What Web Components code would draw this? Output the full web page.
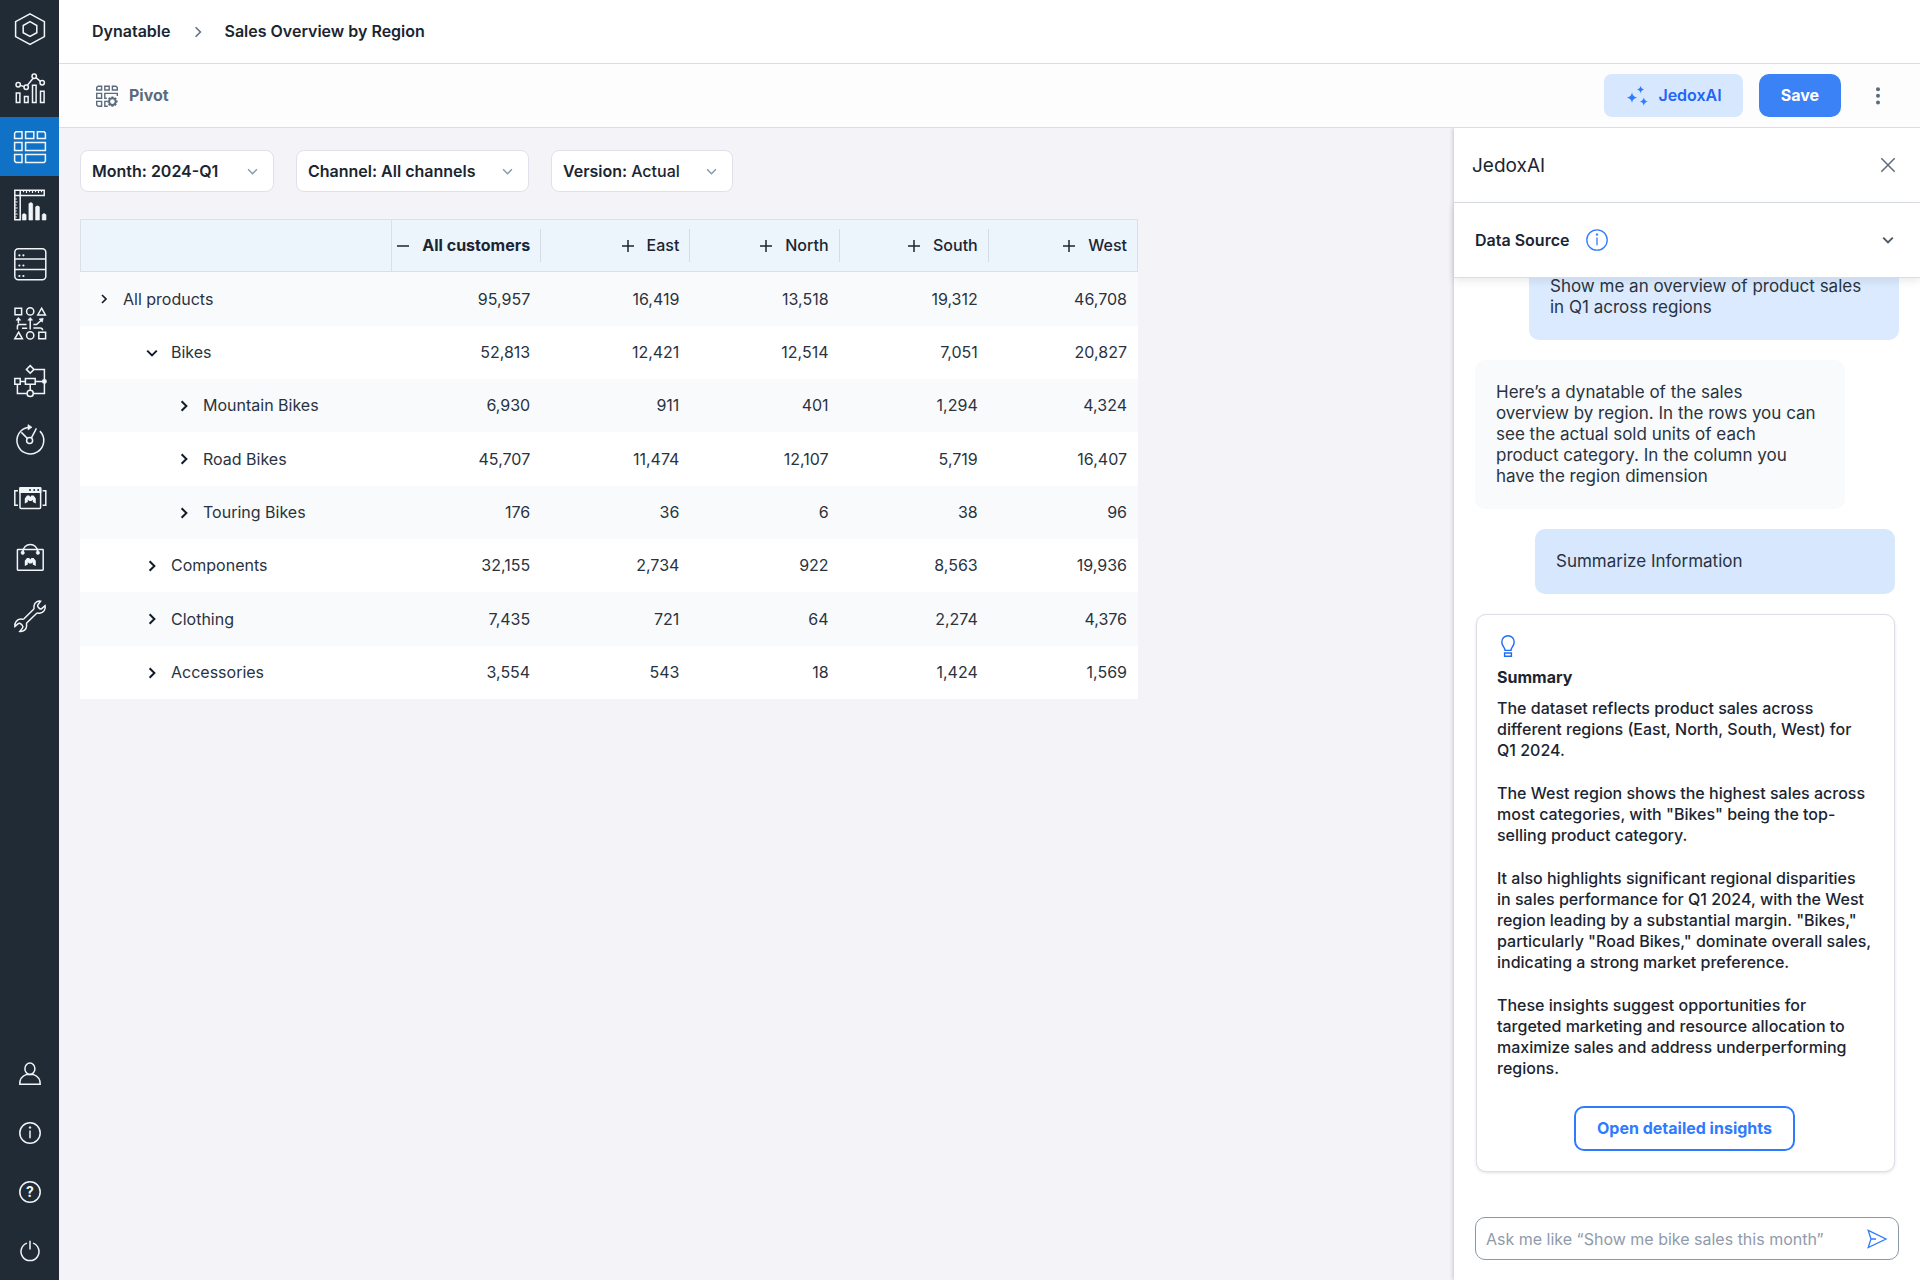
<!DOCTYPE html>
<html lang="en">
<head>
<meta charset="utf-8">
<title>Sales Overview by Region</title>
<style>
  :root {
    --ink: #1b2531;
    --ink-soft: #29333f;
    --muted: #5c6b7c;
    --line: #dadde6;
    --page: #f3f3f8;
    --rail: #212b36;
    --blue: #2f7bff;
    --blue-soft: #d7e8fe;
  }
  html, body { margin: 0; height: 100%; }
  body {
    font-family: Inter, "Liberation Sans", sans-serif;
    font-size: 16px;
    line-height: 21px;
    color: var(--ink);
    background: var(--page);
  }
</style>
</head>
<body>
<app-shell>
  <app-rail slot="rail"></app-rail>
  <app-crumbs slot="head"></app-crumbs>
  <app-toolbar slot="head"></app-toolbar>
  <section slot="main">
    <filter-bar>
      <filter-select label="Month:" value="2024-Q1" strong style="--w:194px"></filter-select>
      <filter-select label="Channel:" value="All channels" strong style="--w:233px"></filter-select>
      <filter-select label="Version:" value="Actual" style="--w:182px"></filter-select>
    </filter-bar>
    <dyna-table></dyna-table>
  </section>
  <ai-panel slot="side">
    <chat-bubble from="user">Show me an overview of product sales in Q1 across regions</chat-bubble>
    <chat-bubble from="ai">Here’s a dynatable of the sales overview by region. In the rows you can see the actual sold units of each product category. In the column you have the region dimension</chat-bubble>
    <chat-bubble from="user" suggested>Summarize Information</chat-bubble>
    <summary-card heading="Summary">
      <p>The dataset reflects product sales across different regions (East, North, South, West) for Q1 2024.</p>
      <p>The West region shows the highest sales across most categories, with "Bikes" being the top-selling product category.</p>
      <p>It also highlights significant regional disparities in sales performance for Q1 2024, with the West region leading by a substantial margin. "Bikes," particularly "Road Bikes," dominate overall sales, indicating a strong market preference.</p>
      <p>These insights suggest opportunities for targeted marketing and resource allocation to maximize sales and address underperforming regions.</p>
    </summary-card>
  </ai-panel>
</app-shell>

<script>
const ICONS = {
  logo: [34, 34, `<path d="M17 1.8 31.4 9.6V24.6L17 32.4 2.6 24.6V9.6Z"/><path d="M17 9.7 23.8 13.5V20.7L17 24.5 10.2 20.7V13.5Z"/>`],
  chart: [34, 34, `<circle cx="5.2" cy="13.7" r="2.2"/><circle cx="13.2" cy="16.3" r="2.2"/><circle cx="21.2" cy="5.3" r="2.2"/><circle cx="29.2" cy="11.7" r="2.2"/><path d="M7.3 14.4 11.1 15.6M14.3 14.4 20.1 7.2M23 6.7 27.4 10.3M3.3 22h3.6v9.6H3.3zM11.5 25.5h3.6v6.1h-3.6zM19.5 14.3h3.6v17.3h-3.6zM27.5 20.2h3.6v11.4h-3.6z"/>`],
  grid: [34, 34, `<path d="M3 1.8h6v6.6H1.6V3.2zM12.6 1.8h8.2v6.6h-8.2zM24.4 1.8h6.8l1.2 1.4v5.2h-8zM1.6 12.4H9v8H1.6zM12.6 12.4h19.8v8H12.6zM1.6 24.4H9v8H3L1.6 31zM12.6 24.4h19.8V31l-1.2 1.4H12.6z"/>`],
  ruler: [34, 34, `<path d="M1.8 2.2h29.4v5.2H7.2v24.4H1.8z"/><path d="M7.2 2.2v5.2H1.8"/><path d="M10.5 4.2V2.5M13.5 5V2.5M16.5 4.2V2.5M19.5 5V2.5M22.5 4.2V2.5M25.5 5V2.5M28.5 4.2V2.5M3.8 11H2.2M4.6 14H2.2M3.8 17H2.2M4.6 20H2.2M3.8 23H2.2M4.6 26H2.2M3.8 29H2.2" stroke-width="1.2"/><path d="M9.3 32v-5.2l1-1h1.8l1 1V32zM15.9 32V15.8l1-1h1.8l1 1V32zM22.6 32V19l1-1h1.8l1 1v13zM29.2 32v-5.2l1-1h1.8l1 1V32z" fill="currentColor" stroke-width=".6"/>`],
  db: [34, 34, `<rect x="1.8" y="1.8" width="31" height="31" rx="3.5"/><path d="M1.8 12h31M1.8 22.4h31"/><g fill="currentColor" stroke="none"><circle cx="6.4" cy="8.3" r="1.1"/><circle cx="10.4" cy="8.3" r="1.1"/><circle cx="6.4" cy="18.5" r="1.1"/><circle cx="10.4" cy="18.5" r="1.1"/><circle cx="6.4" cy="29" r="1.1"/><circle cx="10.4" cy="29" r="1.1"/></g>`],
  shapes: [34, 34, `<path d="M2 2.2h6.6v6.6H2zM25.8 26.2h6.8v6.6h-6.8zM28.6 2.2l3.8 6.8h-7.6zM5.6 26.2l3.8 6.6H1.8z"/><circle cx="17.2" cy="5.4" r="3.6"/><circle cx="17.2" cy="29.4" r="3.6"/><path d="M17.2 23.5V13M5.4 17.5V13M4.4 23.5V20.6Q4.4 18.6 6.4 18.6H13.5M9 22.2H14.2M20.4 22H27Q29.6 22 29.6 24.2M20.4 18.6H23.5L28.6 14"/><path d="M14.8 14.2 17.2 11.4 19.6 14.2zM3 14.2 5.4 11.4 7.8 14.2zM26 13l4.2-.8-.8 4z" fill="currentColor" stroke-width=".6"/>`],
  flow: [34, 34, `<path d="M17.2 1.6 21 5.4 17.2 9.2 13.4 5.4zM21 5.4H31.4V29.4H20.6M13.8 29.4H4.4V20.6M7.4 17.4H12.4M22.2 17.4H31.4M17.2 20.6V26.2M1.8 14.6h5.4v5.6H1.8zM12.4 14.6h9.8v5.6h-9.8z"/><circle cx="17.2" cy="29.4" r="3.1"/><circle cx="31.4" cy="17.4" r="1.7" fill="currentColor"/>`],
  gauge: [34, 34, `<path d="M26.9 8.1A13.4 13.4 0 1 1 15.8 4.2"/><circle cx="16.6" cy="17.6" r="3"/><path d="M14.2 15.2 8.4 9.4M18.4 14.8 23.4 5.4"/><path d="M15 1.6 19 4.2 15 7z" fill="currentColor" stroke-width=".6"/>`],
  market: [34, 34, `<rect x="7" y="6.8" width="20.6" height="20.6" rx="1"/><path d="M7 7h20.6v4.2H7z" fill="currentColor"/><path d="M5 9.8H1.8v14.4H5M29.6 9.8h3.2v14.4h-3.2"/><path d="M11.8 22.6v-5.2l2.2-2.8h2.2l1.1 1.4 1.1-1.4h2.2l2.2 2.8v5.2l-3-1.6v-2.2l-1.4 1.2h-2.2l-1.4-1.2v2.2z" fill="currentColor" stroke="none"/><g fill="#212b36" stroke="none"><circle cx="17" cy="9" r="1"/><circle cx="21.2" cy="9" r="1"/><circle cx="25.2" cy="9" r="1"/></g>`],
  bag: [34, 34, `<rect x="4.4" y="9.4" width="25.8" height="20.8" rx=".6"/><path d="M9.7 12.6C10 1.8 24.6 1.8 24.9 12.6"/><circle cx="9.7" cy="12.8" r="1.7" fill="currentColor" stroke-width=".6"/><circle cx="24.9" cy="12.8" r="1.7" fill="currentColor" stroke-width=".6"/><path d="M11.8 26v-5.2l2.2-2.8h2.2l1.1 1.4 1.1-1.4h2.2l2.2 2.8v5.2l-3-1.6v-2.2l-1.4 1.2h-2.2l-1.4-1.2v2.2z" fill="currentColor" stroke="none"/>`],
  wrench: [34, 34, `<path d="M27.6 2.2C25.4 1.6 21.4 3 21 7c-.1 1.6.4 2.4-.4 3.2L11 19.8c-.9.8-1.6.2-3.2.3-4 .3-6.4 3.6-5.9 7.4l3-2.6c1-.8 2-.8 2.9 0l1.4 1.3c.9.9 1 1.9.2 2.9l-2.6 3.3c3.8.5 6.6-2 6.8-5.4.1-1.6-.5-2.5.3-3.3l9.6-9.2c.9-.8 1.8-.2 3.2-.3 4-.4 6.2-4 5.4-7.6L29 9.4c-.9.8-1.8.8-2.6 0l-1.2-1.2c-.8-.8-.8-1.8-.1-2.7z"/>`],
  user: [24, 24, `<ellipse cx="11.9" cy="6.8" rx="5" ry="5.7"/><path d="M1.8 22.2C1.4 16 5.4 13.6 8.6 12.4H15.2C18.4 13.6 22.4 16 22.2 22.2Z"/>`],
  info: [24, 24, `<circle cx="12" cy="12" r="10.2"/><path d="M12 9.4V17.2"/><circle cx="12" cy="6.6" r="1" fill="currentColor" stroke-width=".4"/>`],
  help: [24, 24, `<circle cx="12" cy="12" r="10.2"/><text x="12" y="17" text-anchor="middle" font-family="Inter, sans-serif" font-size="14" font-weight="700" fill="currentColor" stroke="none">?</text>`],
  power: [24, 24, `<path d="M9 4.1A9 9 0 1 0 15 4.1M12 1.8V10.6"/>`],
  pivot: [24, 24, `<path d="M3 2.2h3.6v3.8H1.7V3.5zM9.8 2.2h4.4v3.8H9.8zM17.4 2.2h3.4l1.5 1.3v2.5h-4.9zM1.7 9.4h4.9v4.8H1.7zM1.7 17.4h4.9v4.8H3L1.7 21zM22.3 12V9.4H9.8v4.8h2M12 17.4H9.8v4.8h3"/><circle cx="17.4" cy="17.6" r="3.3" stroke-width="2"/><path d="M17.4 12.4v1.6M17.4 21.2v1.6M12.2 17.6h1.6M21 17.6h1.6M13.7 13.9l1.1 1.1M20 20.2l1.1 1.1M13.7 21.3l1.1-1.1M20 15l1.1-1.1" stroke-width="2"/>`],
  sparkle: [24, 24, `<g fill="currentColor" stroke="none"><path d="M7 8.4Q7.8 12.8 12.2 13.6 7.8 14.4 7 18.8 6.2 14.4 1.8 13.6 6.2 12.8 7 8.4zM15.6 1.8Q16.2 5 19.2 5.6 16.2 6.2 15.6 9.4 15 6.2 12 5.6 15 5 15.6 1.8zM18.8 13.4Q19.5 17 23 17.6 19.5 18.2 18.8 21.8 18.1 18.2 14.6 17.6 18.1 17 18.8 13.4z"/></g>`],
  dots: [24, 24, `<g fill="currentColor" stroke="none"><circle cx="12" cy="5.2" r="2"/><circle cx="12" cy="11.8" r="2"/><circle cx="12" cy="18.4" r="2"/></g>`],
  close: [24, 24, `<path d="M5.3 5.3 18.7 18.7M18.7 5.3 5.3 18.7"/>`],
  down: [12, 12, `<path d="M1.2 3.6 6 8.4 10.8 3.6"/>`],
  right: [12, 12, `<path d="M3.6 1.2 8.4 6 3.6 10.8"/>`],
  plus: [12, 12, `<path d="M6 0V12M0 6H12"/>`],
  minus: [12, 12, `<path d="M0 6H12"/>`],
  bulb: [22, 22, `<path d="M8 15.4C8 12.6 4.8 11 4.8 7A6.2 6.2 0 0 1 17.2 7C17.2 11 14 12.6 14 15.4ZM7.6 18h6.8v3.2H7.6z"/>`],
  send: [22, 22, `<path d="M2.2 2.4 20 11 2.2 19.6 5 11ZM5 11H10"/>`]
};

/* Base class: attaches an open shadow root and fills it from render(). */
class Part extends HTMLElement {
  connectedCallback() {
    if (this.shadowRoot) return;
    this.attachShadow({ mode: "open" }).innerHTML =
      `<style>:host,*{box-sizing:border-box}button{font:inherit;color:inherit;border:0;background:none;padding:0;margin:0;cursor:pointer}${this.css()}</style>${this.render()}`;
  }
  css() { return ":host{display:block}"; }
  render() { return "<slot></slot>"; }
}

class UiIcon extends Part {
  css() { return ":host{display:inline-flex;flex:none}svg{display:block;overflow:visible}"; }
  render() {
    const [w, h, body] = ICONS[this.getAttribute("name")];
    const sw = this.getAttribute("weight") || "1.5";
    const s = Number(this.getAttribute("size")) || w;
    return `<svg width="${s}" height="${s * h / w}" viewBox="0 0 ${w} ${h}" fill="none" stroke="currentColor" stroke-width="${sw}" aria-hidden="true">${body}</svg>`;
  }
}

class AppShell extends Part {
  css() { return `
    :host{display:flex;height:100vh;min-height:1240px}
    .page{flex:1;min-width:0;display:flex;flex-direction:column}
    .body{flex:1;min-height:0;display:flex}
    main{flex:1;min-width:0;padding:22px 21px}`; }
  render() { return `<slot name="rail"></slot><div class="page"><slot name="head"></slot>
    <div class="body"><main><slot name="main"></slot></main><slot name="side"></slot></div></div>`; }
}

class AppRail extends Part {
  css() { return `
    :host{display:flex;width:59px;flex:none;background:var(--rail);color:#fff}
    nav{flex:1;display:flex;flex-direction:column;justify-content:space-between}
    div{display:flex;flex-direction:column}
    .top{height:645px}.bottom{height:235px}
    a{flex:1;display:flex;align-items:center;justify-content:center;color:#f2f5f8}
    a[aria-current]{background:#1072c6}`; }
  render() {
    const link = ([n, t]) => `<a href="#${n}" aria-label="${t}"${n === "grid" ? ' aria-current="page"' : ""}><ui-icon name="${n}"></ui-icon></a>`;
    const top = [["logo", "Home"], ["chart", "Analyze"], ["grid", "Dynatables"], ["ruler", "Canvas"], ["db", "Databases"], ["shapes", "Integrator"], ["flow", "Processes"], ["gauge", "Scheduler"], ["market", "Models"], ["bag", "Marketplace"], ["wrench", "Administration"]];
    const bottom = [["user", "Profile"], ["info", "About"], ["help", "Help"], ["power", "Log out"]];
    return `<nav aria-label="Main"><div class="top">${top.map(link).join("")}</div><div class="bottom">${bottom.map(link).join("")}</div></nav>`;
  }
}

class AppCrumbs extends Part {
  css() { return `
    :host{display:block;background:#fff;border-bottom:1px solid var(--line)}
    nav{height:63px;display:flex;align-items:center;gap:21px;padding:0 33px;font-weight:600}
    a{color:inherit;text-decoration:none}ui-icon{color:var(--muted)}`; }
  render() { return `<nav aria-label="Breadcrumb"><a href="#dynatable">Dynatable</a><ui-icon name="right"></ui-icon><a href="#report" aria-current="page">Sales Overview by Region</a></nav>`; }
}

class AppToolbar extends Part {
  css() { return `
    :host{display:flex;align-items:center;height:64px;padding:0 30px 0 36px;background:#fdfdfe;border-bottom:1px solid var(--line)}
    button{display:flex;align-items:center;justify-content:center;font-weight:600}
    .pivot{gap:10px;color:var(--muted);margin-right:auto;font-weight:700}
    .ai,.save{height:43px}
    .ai{gap:9px;padding:0 21px;background:var(--blue-soft);border-radius:8px;color:#2165f5}
    .ai ui-icon{color:#2f7bff}
    .save{margin:0 25px 0 16px;padding:0 22px;background:#3b82f6;border-radius:10px;color:#fff;font-weight:700}
    .more{color:var(--muted)}`; }
  render() { return `<button class="pivot"><ui-icon name="pivot" weight="1.4"></ui-icon>Pivot</button>
    <button class="ai"><ui-icon name="sparkle"></ui-icon>JedoxAI</button>
    <button class="save">Save</button>
    <button class="more" aria-label="More actions"><ui-icon name="dots"></ui-icon></button>`; }
}

class FilterBar extends Part {
  css() { return ":host{display:flex;gap:22px;margin-bottom:27px}"; }
}

class FilterSelect extends Part {
  css() { return `
    :host{display:block;width:var(--w)}
    .box{position:relative;display:flex;align-items:center;height:42px;background:#fff;border:1px solid #e0e1ea;border-radius:8px}
    label{font-weight:600;padding-left:11px;white-space:nowrap}
    select{flex:1;min-width:0;height:100%;appearance:none;border:0;background:none;font:inherit;font-weight:500;color:inherit;margin:0;padding:0 32px 0 4px}
    :host([strong]) select{font-weight:600}
    ui-icon{position:absolute;right:15px;top:15px;color:#8797a9;pointer-events:none}`; }
  render() { return `<div class="box"><label for="s">${this.getAttribute("label")}</label>
    <select id="s"><option>${this.getAttribute("value")}</option></select><ui-icon name="down" size="11"></ui-icon></div>`; }
}

class DynaTable extends Part {
  css() { return `
    :host{display:block;width:1058px;max-width:100%}
    table{width:100%;table-layout:fixed;border-collapse:separate;border-spacing:0}
    col:first-child{width:312px}
    th,td{padding:0 11px 0 0;text-align:right;font-weight:400;white-space:nowrap;color:var(--ink-soft)}
    thead th,thead td{height:53px;background:#ecf4fc;border:solid #dadfe8;border-width:1px 0;font-weight:500;color:var(--ink)}
    thead td{border-left-width:1px;border-right-width:1px}
    thead th{padding:0}
    thead th:last-child{border-right-width:1px}
    thead span{display:flex;align-items:center;justify-content:flex-end;gap:13px;height:33px;padding-right:10px;border-right:1px solid #d5dce6}
    thead th:last-child span{border:0}
    thead .all{font-weight:700}
    tbody tr{height:53px;background:#fff}
    tbody tr:nth-child(3n+1){height:54px}
    tbody tr:nth-child(odd){background:#f9fafc}
    tbody th{text-align:left;padding:0}
    tbody th div{display:flex;align-items:center;gap:7px;padding-left:12px}
    tbody th .l1{padding-left:60px}
    tbody th .l2{padding-left:92px}
    tbody button{display:flex;width:24px;height:24px;align-items:center;justify-content:center;color:#111c27}
    thead button{display:flex}`; }
  render() {
    const cols = ["All customers", "East", "North", "South", "West"];
    const rows = [
      ["All products", 0, 0, "95,957", "16,419", "13,518", "19,312", "46,708"],
      ["Bikes", 1, 1, "52,813", "12,421", "12,514", "7,051", "20,827"],
      ["Mountain Bikes", 2, 0, "6,930", "911", "401", "1,294", "4,324"],
      ["Road Bikes", 2, 0, "45,707", "11,474", "12,107", "5,719", "16,407"],
      ["Touring Bikes", 2, 0, "176", "36", "6", "38", "96"],
      ["Components", 1, 0, "32,155", "2,734", "922", "8,563", "19,936"],
      ["Clothing", 1, 0, "7,435", "721", "64", "2,274", "4,376"],
      ["Accessories", 1, 0, "3,554", "543", "18", "1,424", "1,569"]
    ];
    return `<table><colgroup><col><col><col><col><col><col></colgroup>
      <thead><tr><td></td>${cols.map((c, i) => `<th scope="col"${i ? "" : ' class="all"'}><span><button aria-label="${i ? "Expand" : "Collapse"} ${c}"><ui-icon name="${i ? "plus" : "minus"}"></ui-icon></button>${c}</span></th>`).join("")}</tr></thead>
      <tbody>${rows.map(([n, l, open, ...v]) => `<tr><th scope="row"><div class="l${l}"><button aria-expanded="${!!open}" aria-label="Toggle ${n}"><ui-icon name="${open ? "down" : "right"}" size="${l ? 12 : 10}" weight="2"></ui-icon></button>${n}</div></th>${v.map(x => `<td>${x}</td>`).join("")}</tr>`).join("")}</tbody></table>`;
  }
}

class AiPanel extends Part {
  css() { return `
    :host{display:flex;flex-direction:column;width:466px;flex:none;background:#fff;box-shadow:-1px 0 4px rgba(40,50,80,.22);clip-path:inset(0 0 0 -8px)}
    header,.source{display:flex;align-items:center;height:75px;flex:none;border-bottom:1px solid var(--line)}
    header{justify-content:space-between;padding:0 20px 0 18px}
    h2{margin:0;font-size:19px;font-weight:400}
    header button,.toggle{display:flex;color:var(--muted)}
    .source{position:relative;padding:0 26px 0 21px;font-weight:600;background:#fff;box-shadow:0 3px 8px rgba(40,50,80,.1)}
    h3{margin:0;font-size:16px;font-weight:600}
    .hint{display:flex;margin-left:16px;color:var(--blue)}
    .toggle{margin-left:auto;color:#4a5a6b}
    .chat{flex:1;min-height:0;overflow:hidden;display:flex;flex-direction:column;justify-content:flex-end;gap:20px;padding:0 21px 45px}
    form{position:relative;display:flex;margin:0 21px 20px}
    input{flex:1;min-width:0;height:43px;border:1px solid #8b98a9;border-radius:10px;background:#fff;padding:0 50px 0 10px;font:inherit;color:inherit;outline:0}
    input::placeholder{color:#8f9bab;opacity:1}
    form button{position:absolute;right:11px;top:11px;color:var(--blue);display:flex}`; }
  render() { return `<header><h2>JedoxAI</h2><button aria-label="Close panel"><ui-icon name="close"></ui-icon></button></header>
    <div class="source"><h3>Data Source</h3><button class="hint" aria-label="About the data source"><ui-icon name="info" weight="1.3"></ui-icon></button>
    <button class="toggle" aria-label="Show data source"><ui-icon name="down" weight="2"></ui-icon></button></div>
    <div class="chat"><slot></slot></div>
    <form><input type="text" aria-label="Ask JedoxAI" placeholder="Ask me like “Show me bike sales this month”"><button type="button" aria-label="Send"><ui-icon name="send" weight="1.3"></ui-icon></button></form>`; }
}

class ChatBubble extends Part {
  css() { return `
    :host{display:block;flex:none;width:370px;padding:22px 29px 22px 21px;border-radius:10px;font-size:17px;line-height:21px;color:var(--ink-soft);background:#f9fafc}
    :host([from=user]){align-self:flex-end;background:#dbeafe}
    :host([suggested]){width:360px;margin-right:4px;background:var(--blue-soft)}`; }
}

class SummaryCard extends Part {
  css() { return `
    :host{display:flex;flex-direction:column;gap:10px;flex:none;margin:0 4px 0 1px;padding:20px 22px 20px 20px;border:1px solid #dcdee8;border-radius:10px;box-shadow:0 1px 3px rgba(40,50,80,.14);background:#fff}
    ui-icon{color:#1f6cf5}
    h3{margin:0;font-size:16px;font-weight:700}
    .text{display:flex;flex-direction:column;gap:22px;font-weight:500;color:var(--ink)}
    ::slotted(p){margin:0}
    button{align-self:center;height:45px;margin-top:17px;padding:0 21px;border:2px solid var(--blue);border-radius:10px;color:var(--blue);font-weight:700}`; }
  render() { return `<ui-icon name="bulb" weight="1.4"></ui-icon><h3>${this.getAttribute("heading")}</h3><div class="text"><slot></slot></div><button>Open detailed insights</button>`; }
}

for (const [tag, cls] of Object.entries({
  "ui-icon": UiIcon, "app-shell": AppShell, "app-rail": AppRail, "app-crumbs": AppCrumbs,
  "app-toolbar": AppToolbar, "filter-bar": FilterBar, "filter-select": FilterSelect,
  "dyna-table": DynaTable, "ai-panel": AiPanel, "chat-bubble": ChatBubble, "summary-card": SummaryCard
})) customElements.define(tag, cls);
</script>
</body>
</html>
